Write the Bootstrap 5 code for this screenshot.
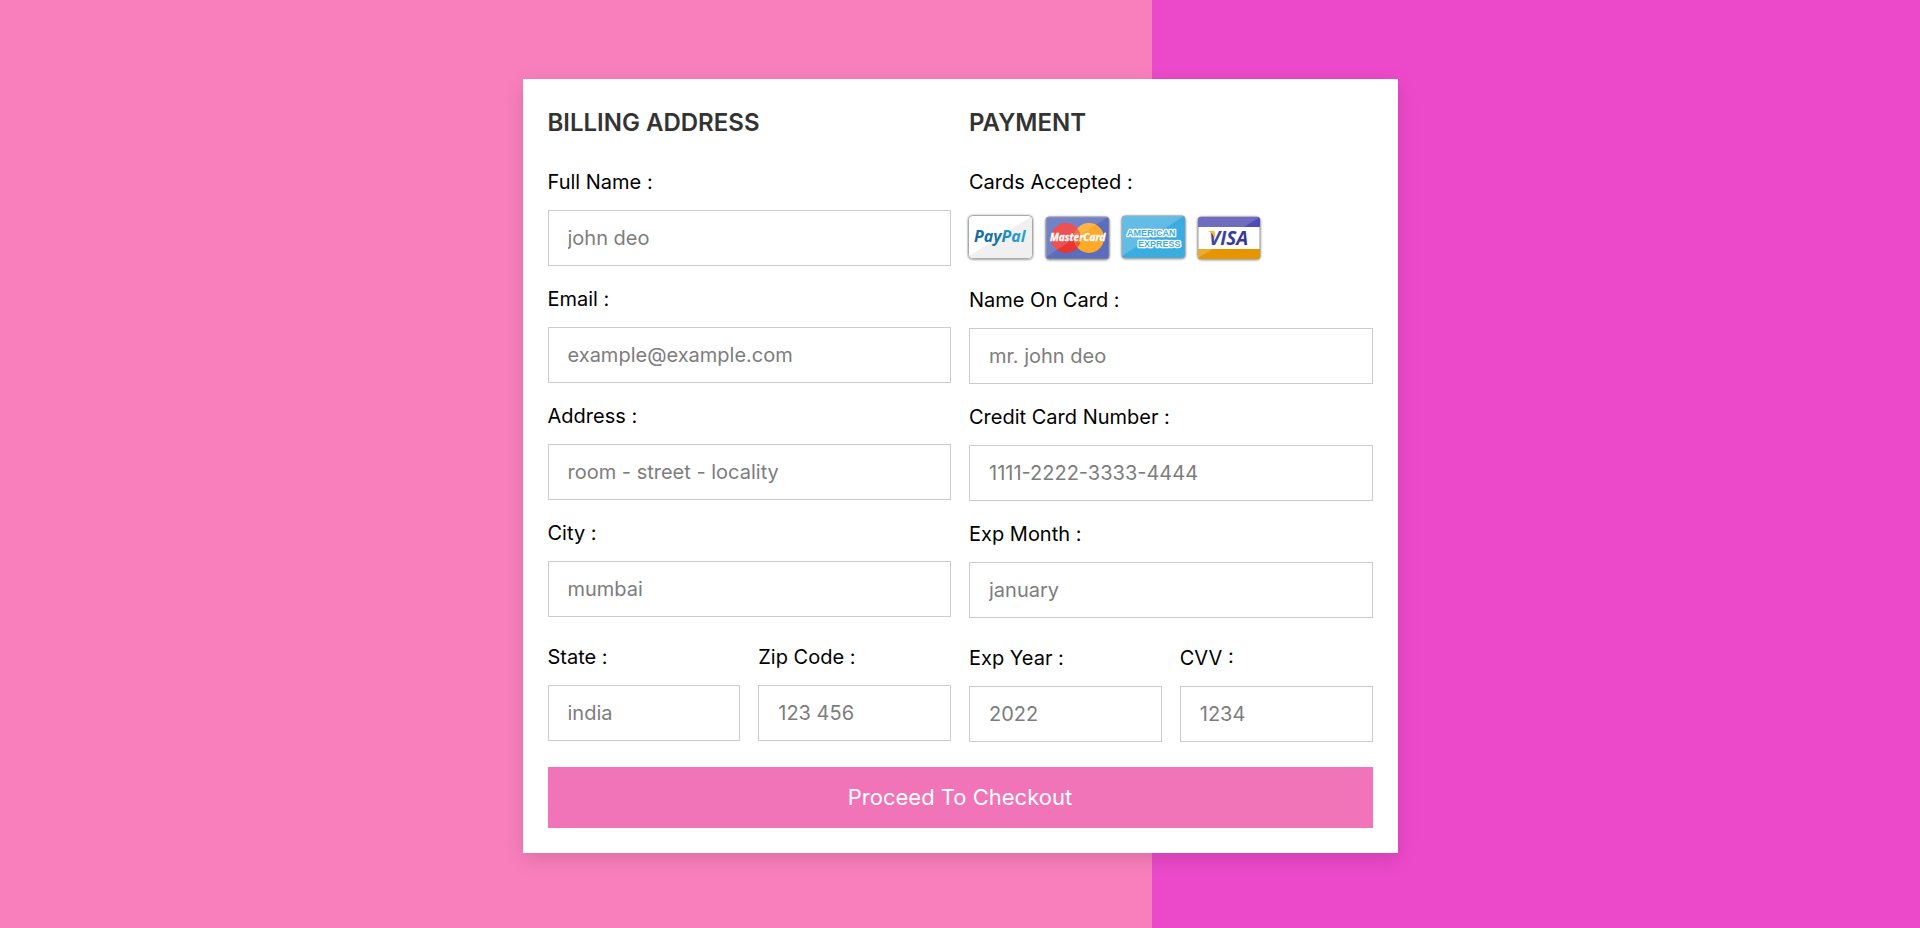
<!DOCTYPE html>
<html lang="en">
<head>
<meta charset="utf-8">
<meta name="viewport" content="width=device-width, initial-scale=1">
<title>Checkout</title>
<link href="https://cdn.jsdelivr.net/npm/bootstrap@5.3.0/dist/css/bootstrap.min.css" rel="stylesheet">
<style>
  body {
    font-family: Inter, "Open Sans", sans-serif;
    color: #000;
    background: linear-gradient(90deg, #f97fbc 60%, #ec49ca 60%);
  }
  .page { padding: 28px 24px 24px; }
  .checkout {
    max-width: 875px;
    padding: 25px;
    box-shadow: 0 6px 19px rgba(0, 0, 0, .13);
  }
  .checkout .row { --bs-gutter-x: 18px; --bs-gutter-y: 0; }
  .section-title {
    margin: 0 0 26px;
    font-size: 24px;
    line-height: 38px;
    font-weight: 600;
    color: #333;
  }
  .field { margin-bottom: 19px; }
  .field-last { margin: 26px 0 25px; }
  .field-label {
    display: block;
    margin-bottom: 13px;
    font-size: 20px;
    line-height: 29px;
    font-weight: 400;
  }
  .checkout .form-control {
    height: 56px;
    padding: 0 19px;
    border-color: #ccc;
    font-size: 20px;
    font-weight: 400;
  }
  .checkout .form-control::placeholder { color: #7d7d7d; }
  .card-logos { display: block; width: 296px; height: 57px; overflow: visible; }
  .btn-checkout {
    --bs-btn-color: #fff;
    --bs-btn-bg: #f174b9;
    --bs-btn-hover-color: #fff;
    --bs-btn-hover-bg: #e45fab;
    --bs-btn-active-color: #fff;
    --bs-btn-active-bg: #d9519f;
    height: 61px;
    font-size: 22px;
  }
</style>
</head>
<body>
<main class="page min-vh-100 d-flex align-items-center justify-content-center">
  <form class="checkout bg-white w-100">
    <div class="row">
      <div class="col-md-6">
        <h3 class="section-title text-uppercase">Billing Address</h3>
        <div class="field">
          <label class="field-label" for="name">Full Name :</label>
          <input class="form-control rounded-0" id="name" type="text" placeholder="john deo">
        </div>
        <div class="field">
          <label class="field-label" for="email">Email :</label>
          <input class="form-control rounded-0" id="email" type="email" placeholder="example@example.com">
        </div>
        <div class="field">
          <label class="field-label" for="address">Address :</label>
          <input class="form-control rounded-0" id="address" type="text" placeholder="room - street - locality">
        </div>
        <div class="field">
          <label class="field-label" for="city">City :</label>
          <input class="form-control rounded-0" id="city" type="text" placeholder="mumbai">
        </div>
        <div class="row field-last">
          <div class="col-6 ps-0">
            <label class="field-label" for="state">State :</label>
            <input class="form-control rounded-0" id="state" type="text" placeholder="india">
          </div>
          <div class="col-6 pe-0">
            <label class="field-label" for="zip">Zip Code :</label>
            <input class="form-control rounded-0" id="zip" type="text" placeholder="123 456">
          </div>
        </div>
      </div>
      <div class="col-md-6">
        <h3 class="section-title text-uppercase">Payment</h3>
        <div class="field">
          <span class="field-label">Cards Accepted :</span>
          <svg class="card-logos" viewBox="0 0 296 57" role="img" aria-label="PayPal, MasterCard, American Express, Visa">
            <defs>
              <linearGradient id="pp" x1="0" x2="1"><stop offset="0" stop-color="#146a9c"/><stop offset=".5" stop-color="#1a75a6"/><stop offset=".6" stop-color="#2090bf"/><stop offset="1" stop-color="#25a5cc"/></linearGradient>
              <linearGradient id="vs" x1="0" x2="1"><stop offset="0" stop-color="#3f4d9c"/><stop offset="1" stop-color="#36319a"/></linearGradient>
              <clipPath id="c1"><rect x="0" y="6" width="63" height="42" rx="4"/></clipPath>
              <clipPath id="c2"><rect x="77" y="7" width="63" height="42" rx="3"/></clipPath>
              <clipPath id="c3"><rect x="153" y="6" width="63" height="42" rx="3"/></clipPath>
              <clipPath id="c4"><rect x="229" y="7" width="62" height="42" rx="3"/></clipPath>
              <filter id="sh" x="-10%" y="-10%" width="120%" height="125%"><feDropShadow dx="0" dy="0.5" stdDeviation="0.8" flood-opacity=".5"/></filter>
            </defs>
            <!-- PayPal -->
            <g filter="url(#sh)"><rect x="-.5" y="5.500" width="64" height="43" rx="4" fill="#fff" stroke="#aaa"/></g>
            <path clip-path="url(#c1)" d="M63 6 V48 H0 V46 Z" fill="#f0f0f0"/>
            <text x="5" y="32" font-family="Open Sans" font-size="16" font-weight="700" font-style="italic" fill="url(#pp)">PayPal</text>
            <!-- MasterCard -->
            <rect x="77" y="7" width="63" height="42" rx="3" fill="#5a6ebd" stroke="#8b8b95" filter="url(#sh)"/>
            <circle cx="97" cy="28" r="15" fill="#ea3535"/>
            <circle cx="120" cy="28" r="15" fill="#ffa928"/>
            <path d="M108.500 18.500 A15 15 0 0 1 108.500 37.500 A15 15 0 0 1 108.500 18.500" fill="#ed5535"/>
            <path d="M105 24h7M105 28h7M105 32h7" stroke="#ffa928" stroke-width=".8" opacity=".6"/>
            <path clip-path="url(#c2)" d="M77 7 H139 L77 47 Z" fill="#fff" opacity=".14"/>
            <text x="81" y="31" font-family="Open Sans" font-size="10" font-weight="700" font-style="italic" fill="#fff" stroke="#fff" stroke-width=".3">MasterCard</text>
            <!-- American Express -->
            <rect x="153" y="6" width="63" height="42" rx="3" fill="#3bace0" stroke="#7f9fae" filter="url(#sh)"/>
            <path clip-path="url(#c3)" d="M153 6 H215 L153 46 Z" fill="#fff" opacity=".2"/>
            <g font-family="Liberation Sans" font-size="9" font-weight="700" fill="#3bace0" stroke="#fff" stroke-width="2.500" stroke-linejoin="round" paint-order="stroke">
              <text x="158" y="26">AMERICAN</text>
              <text x="169" y="37">EXPRESS</text>
            </g>
            <!-- Visa -->
            <rect x="229" y="7" width="62" height="42" rx="3" fill="#fff" stroke="#999" filter="url(#sh)"/>
            <g clip-path="url(#c4)">
              <path d="M229 7h62v10h-62z" fill="#4f4db5"/>
              <path d="M229 7h62L275 17h-46z" fill="#fff" opacity=".18"/>
              <path d="M229 39h62v10h-62z" fill="#e59500"/>
              <path d="M229 39h15l-15 9z" fill="#fff" opacity=".2"/>
            </g>
            <text x="240" y="35" font-family="Open Sans" font-size="19" font-weight="700" font-style="italic" fill="url(#vs)">VISA</text>
            <path d="M239 21h5q2 0 2 3v5q-2-6-7-8z" fill="#f5bd2c"/>
          </svg>
        </div>
        <div class="field">
          <label class="field-label" for="card-name">Name On Card :</label>
          <input class="form-control rounded-0" id="card-name" type="text" placeholder="mr. john deo">
        </div>
        <div class="field">
          <label class="field-label" for="card-number">Credit Card Number :</label>
          <input class="form-control rounded-0" id="card-number" type="text" placeholder="1111-2222-3333-4444">
        </div>
        <div class="field">
          <label class="field-label" for="month">Exp Month :</label>
          <input class="form-control rounded-0" id="month" type="text" placeholder="january">
        </div>
        <div class="row field-last">
          <div class="col-6 ps-0">
            <label class="field-label" for="year">Exp Year :</label>
            <input class="form-control rounded-0" id="year" type="text" placeholder="2022">
          </div>
          <div class="col-6 pe-0">
            <label class="field-label" for="cvv">CVV :</label>
            <input class="form-control rounded-0" id="cvv" type="text" placeholder="1234">
          </div>
        </div>
      </div>
    </div>
    <button class="btn btn-checkout w-100 rounded-0 border-0" type="submit">Proceed To Checkout</button>
  </form>
</main>
<script src="https://cdn.jsdelivr.net/npm/bootstrap@5.3.0/dist/js/bootstrap.bundle.min.js"></script>
</body>
</html>
